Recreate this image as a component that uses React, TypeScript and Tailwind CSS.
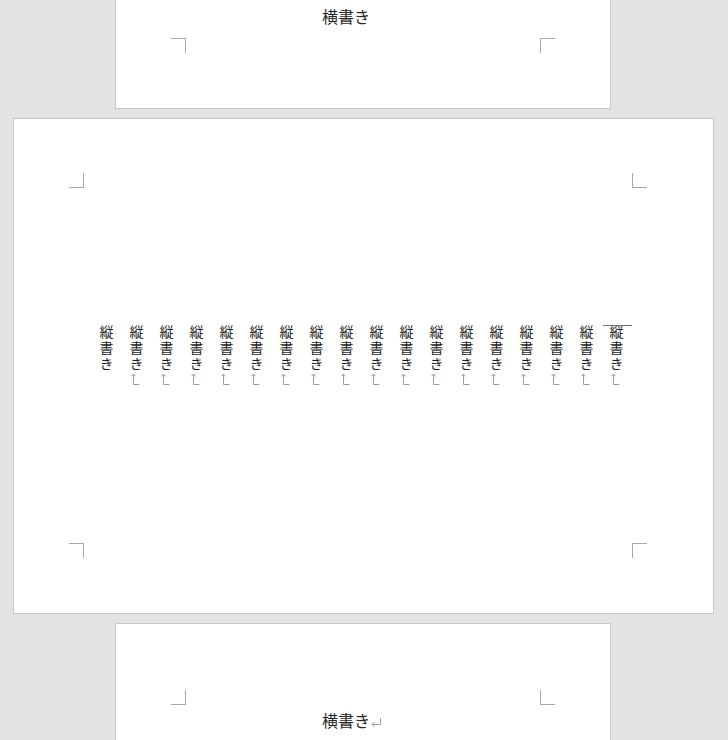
import React from 'react';

const jp = { fontFamily: '"Noto Sans CJK JP", "Noto Sans", sans-serif' };

// small corner marks that Word draws at the text area edges
const Mark = ({ sides }: { sides: string }) => (
  <div className={`w-[15px] h-[15px] shrink-0 border-[#a8a8a8] ${sides}`} />
);

// paragraph mark, turned a quarter when the text runs vertically
const Return = ({ vertical = false }: { vertical?: boolean }) =>
  vertical ? (
    <svg width="9" height="12" viewBox="0 0 9 12" className="inline-block -translate-x-[5px]" fill="none" stroke="#9c9c9c" strokeWidth="1">
      <path d="M2.5 1 V11.5 H8.5" />
      <path d="M0 3.5 L2.5 1 L5 3.5" />
    </svg>
  ) : (
    <svg width="10" height="9" viewBox="0 0 10 9" className="inline-block ml-[1px]" fill="none" stroke="#9c9c9c" strokeWidth="1">
      <path d="M9.5 0 V6.5 H1" />
      <path d="M3.5 4 L1 6.5 L3.5 9" />
    </svg>
  );

export default function App() {
  const columns = Array.from({ length: 18 }, (_, i) => i);

  return (
    <div className="w-full h-[740px] overflow-hidden bg-[#e3e3e3] flex flex-col items-center gap-[9px] pr-[2px]" style={jp}>
      {/* previous page (portrait), only its bottom edge is visible */}
      <div className="w-[496px] h-[109px] shrink-0 bg-white border-x border-b border-[#c6c6c6] flex flex-col">
        <div className="h-[38px] pt-[4px] pl-[206px] text-[16px] leading-[24px] text-[#262626]">横書き</div>
        <div className="flex pl-[55px]">
          <Mark sides="border-t border-r" />
          <div className="w-[354px]" />
          <Mark sides="border-t border-l" />
        </div>
      </div>

      {/* landscape page with vertical text */}
      <div className="w-[701px] h-[496px] shrink-0 bg-white border border-[#c6c6c6] flex flex-col pt-[54px]">
        <div className="flex pl-[55px]">
          <Mark sides="border-b border-r" />
          <div className="w-[548px]" />
          <Mark sides="border-b border-l" />
        </div>
        <div className="flex justify-end pr-[81px]">
          <div className="[writing-mode:vertical-rl] w-[540px] h-[355px] pt-[137px] text-[14px] leading-[30px] tracking-[2px] text-[#1f1f1f]">
            {columns.map((i) => (
              <p key={i} className="relative">
                {i === 0 && <span className="absolute top-0 left-[1px] right-0 h-px bg-[#6e6e6e]" />}
                縦書き{i < columns.length - 1 && <Return vertical />}
              </p>
            ))}
          </div>
        </div>
        <div className="flex pl-[55px]">
          <Mark sides="border-t border-r" />
          <div className="w-[548px]" />
          <Mark sides="border-t border-l" />
        </div>
      </div>

      {/* next page (portrait), top edge */}
      <div className="w-[496px] h-[300px] shrink-0 bg-white border-x border-t border-[#c6c6c6] flex flex-col pt-[66px]">
        <div className="flex pl-[55px]">
          <Mark sides="border-b border-r" />
          <div className="w-[354px]" />
          <Mark sides="border-b border-l" />
        </div>
        <div className="pt-[3px] pl-[206px] text-[16px] leading-[24px] text-[#262626]">
          横書き<Return />
        </div>
      </div>
    </div>
  );
}
